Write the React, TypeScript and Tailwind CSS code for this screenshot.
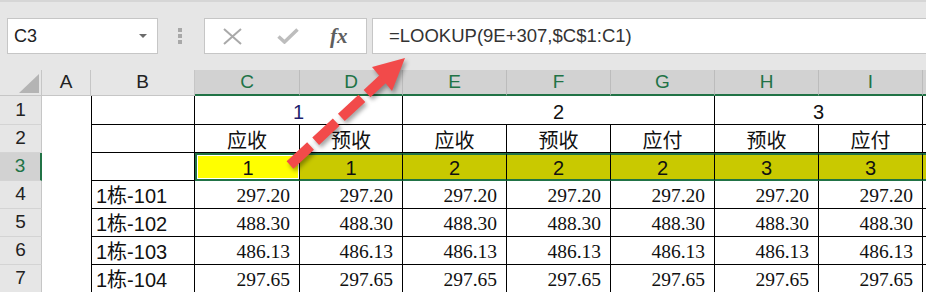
import clsx from 'clsx';

const names = ['1栋-101', '1栋-102', '1栋-103', '1栋-104'];
const amounts = ['297.20', '488.30', '486.13', '297.65'];
const dataCols = ['C', 'D', 'E', 'F', 'G', 'H', 'I'];
const subHeads = ['应收', '预收', '应收', '预收', '应付', '预收', '应付'];
const groupIdx = ['1', '1', '2', '2', '2', '3', '3'];

const sans = "font-['Liberation_Sans','Noto_Sans_CJK_SC',sans-serif]";

const RowHead = ({ n, active }: { n: number; active?: boolean }) => (
  <div
    className={clsx(
      'flex items-center justify-center text-[19px] border-b border-b-[#d4d4d4]',
      active
        ? 'bg-[#d2d2d2] text-[#217346] border-r-2 border-r-[#217346]'
        : 'bg-[#e6e6e6] text-[#222] border-r border-r-[#c6c6c6]'
    )}
  >
    {n}
  </div>
);

const BCell = ({ children }: { children?: React.ReactNode }) => (
  <div className="flex items-end border-l border-r border-b border-black pl-[4px] pb-[2px] text-[20px] leading-[20px] text-[#111]">
    {children}
  </div>
);

const App = () => {
  return (
    <div className={clsx('relative w-[926px] h-[292px] overflow-hidden bg-white', sans)}>
      {/* Formula toolbar */}
      <div className="flex items-start h-[70px] bg-[#e6e6e6] border-t-2 border-t-[#d6d6d6] pt-[16px]">
        <div className="ml-[7px] w-[151px] h-[36px] shrink-0 bg-white border border-[#c6c6c6] flex items-center justify-between pl-[6px] pr-[10px]">
          <span className="text-[18px] text-[#222]">C3</span>
          <span className="w-0 h-0 border-l-[4px] border-r-[4px] border-t-[4px] border-l-transparent border-r-transparent border-t-[#6b6b6b]" />
        </div>

        <div className="ml-[20px] mt-[10px] flex flex-col gap-[2px]">
          <span className="w-[4px] h-[4px] bg-[#a8a8a8]" />
          <span className="w-[4px] h-[4px] bg-[#a8a8a8]" />
          <span className="w-[4px] h-[4px] bg-[#a8a8a8]" />
        </div>

        <div className="ml-[22px] w-[163px] h-[36px] shrink-0 bg-white border border-[#c6c6c6] flex items-center pl-[18px]">
          <svg width="19" height="17" viewBox="0 0 19 17">
            <path d="M1 1 L18 16 M18 1 L1 16" stroke="#a9a9a9" strokeWidth="2" fill="none" />
          </svg>
          <svg className="ml-[35px]" width="22" height="16" viewBox="0 0 22 16">
            <path d="M1.5 8.5 L7.5 14 L20.5 1.5" stroke="#bdbdbd" strokeWidth="3.5" fill="none" />
          </svg>
          <span className="ml-[31px] font-['Liberation_Serif',serif] italic font-semibold text-[21px] text-[#5e5e5e] leading-none">
            fx
          </span>
        </div>

        <div className="ml-[5px] w-[600px] h-[36px] shrink-0 bg-white border border-[#c6c6c6] flex items-center pl-[16px]">
          <span className="text-[18.5px] text-[#333]">=LOOKUP(9E+307,$C$1:C1)</span>
        </div>
      </div>

      {/* Sheet grid */}
      <div className="grid grid-cols-[42px_49px_104px_105px_103px_104px_104px_104px_104px_104px_1fr] grid-rows-[26px_29px_28px_28px_28px_28px_28px_28px]">
        {/* Column headers */}
        <div className="relative bg-[#e6e6e6] border-r border-b border-[#c6c6c6]">
          <svg className="absolute right-[2px] bottom-[2px]" width="20" height="19" viewBox="0 0 20 19">
            <polygon points="20,0 20,19 0,19" fill="#b4b4b4" />
          </svg>
        </div>
        <div className="flex items-center justify-center bg-[#e6e6e6] border-r border-b border-[#c6c6c6] text-[19px] text-[#222]">
          A
        </div>
        <div className="flex items-center justify-center bg-[#e6e6e6] border-r border-b border-[#c6c6c6] text-[19px] text-[#222]">
          B
        </div>
        {dataCols.map((c) => (
          <div
            key={c}
            className="flex items-center justify-center bg-[#d2d2d2] border-r border-r-[#bcbcbc] border-b-2 border-b-[#217346] text-[19px] text-[#217346]"
          >
            {c}
          </div>
        ))}
        <div className="bg-[#d2d2d2] border-b-2 border-b-[#217346]" />

        {/* Row 1 */}
        <RowHead n={1} />
        <div />
        <BCell />
        {[
          { v: '1', span: 'col-span-2', color: 'text-[#1f1f6e]' },
          { v: '2', span: 'col-span-3', color: 'text-[#111]' },
          { v: '3', span: 'col-span-2', color: 'text-[#111]' },
        ].map((g) => (
          <div
            key={g.v}
            className={clsx(
              'flex items-end justify-center border-r border-b border-black pb-[2px] text-[20px] leading-[20px]',
              g.span,
              g.color
            )}
          >
            {g.v}
          </div>
        ))}
        <div className="border-b border-black" />

        {/* Row 2 */}
        <RowHead n={2} />
        <div />
        <BCell />
        {subHeads.map((h, i) => (
          <div
            key={i}
            className="flex items-end justify-center border-r border-b border-black pb-[1px] text-[20px] leading-[20px] text-[#111]"
          >
            {h}
          </div>
        ))}
        <div className="border-b border-black" />

        {/* Row 3 - selected range */}
        <RowHead n={3} active />
        <div />
        <BCell />
        {groupIdx.map((v, i) =>
          i === 0 ? (
            <div
              key={i}
              className="flex border-t-2 border-l-2 border-b-2 border-[#217346] border-r border-r-black"
            >
              <div className="flex-1 flex items-end justify-center bg-[#ffff00] border border-white text-[20px] leading-[20px] text-[#111]">
                {v}
              </div>
            </div>
          ) : (
            <div
              key={i}
              className="flex items-end justify-center bg-[#c9c900] border-t-2 border-b-2 border-[#217346] border-r border-r-black pb-[1px] text-[20px] leading-[20px] text-[#111]"
            >
              {v}
            </div>
          )
        )}
        <div className="bg-[#c9c900] border-t-2 border-b-2 border-[#217346]" />

        {/* Rows 4-7 */}
        {names.map((name, r) => (
          <div key={name} className="contents">
            <RowHead n={r + 4} />
            <div />
            <BCell>{name}</BCell>
            {dataCols.map((c) => (
              <div
                key={c}
                className="flex items-end justify-end border-r border-b border-black pr-[9px] pb-[2px] font-['Liberation_Serif',serif] text-[19.5px] leading-[20px] text-[#111]"
              >
                {amounts[r]}
              </div>
            ))}
            <div className="border-b border-black" />
          </div>
        ))}
      </div>

      {/* Red dashed annotation arrow */}
      <svg
        className="absolute left-0 top-0 pointer-events-none"
        width="926"
        height="292"
        viewBox="0 0 926 292"
        style={{ filter: 'drop-shadow(2px 3px 2px rgba(0,0,0,0.35))' }}
      >
        <line
          x1="290"
          y1="165"
          x2="385"
          y2="77"
          stroke="#f24a4a"
          strokeWidth="10"
          strokeDasharray="28 7"
        />
        <polygon points="372,67 405,58 392,91" fill="#f24a4a" />
      </svg>
    </div>
  );
};

export default App;
